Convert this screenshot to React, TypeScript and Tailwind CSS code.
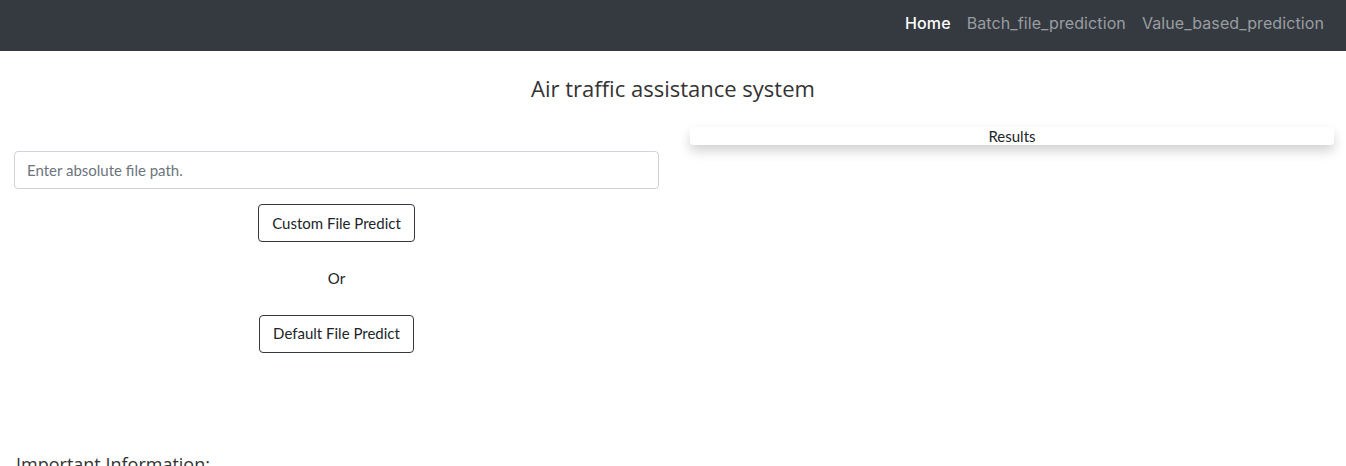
export default function App() {
  return (
    <div className="min-h-screen bg-white font-['Lato','Open_Sans',sans-serif] text-[#212529]">
      {/* Navbar */}
      <nav className="h-[51px] bg-[#343a40] flex items-center justify-end pr-[14px] pb-[6px]">
        <ul className="flex items-center text-[16px] font-['Inter',sans-serif] tracking-[0.1px]">
          <li className="px-2 text-white font-medium">Home</li>
          <li className="px-2 text-[#9a9da0]">Batch_file_prediction</li>
          <li className="px-2 text-[#9a9da0]">Value_based_prediction</li>
        </ul>
      </nav>

      {/* Title */}
      <h3 className="text-center text-[22px] mt-[24px] font-['Open_Sans',sans-serif] text-[#333] leading-[26px]">
        Air traffic assistance system
      </h3>

      <div className="grid grid-cols-2 mt-[26px]">
        {/* Left column */}
        <div className="px-[15px] pt-[24px] flex flex-col items-center">
          <input
            type="text"
            placeholder="Enter absolute file path."
            className="w-[calc(100%+2px)] h-[38px] border border-[#ced4da] rounded px-3 text-[15px] placeholder:text-[#6c757d] outline-none"
          />
          <button className="mt-[15px] h-[38px] px-[13px] border border-[#343a40] rounded text-[15px] text-[#212529]">
            Custom File Predict
          </button>
          <p className="mt-[25px] text-[15px]">Or</p>
          <button className="mt-[25px] h-[38px] px-[13px] border border-[#343a40] rounded text-[15px] text-[#212529]">
            Default File Predict
          </button>
        </div>

        {/* Right column */}
        <div className="pl-[17px] pr-[12px]">
          <div className="h-[18px] rounded bg-white shadow-[0_6px_12px_rgba(0,0,0,0.18)] text-center text-[15px] leading-[18px]">
            Results
          </div>
        </div>
      </div>

      <h4 className="mt-[98px] ml-[16px] text-[18px] font-['Open_Sans',sans-serif] text-[#333]">
        Important Information:
      </h4>
    </div>
  );
}
